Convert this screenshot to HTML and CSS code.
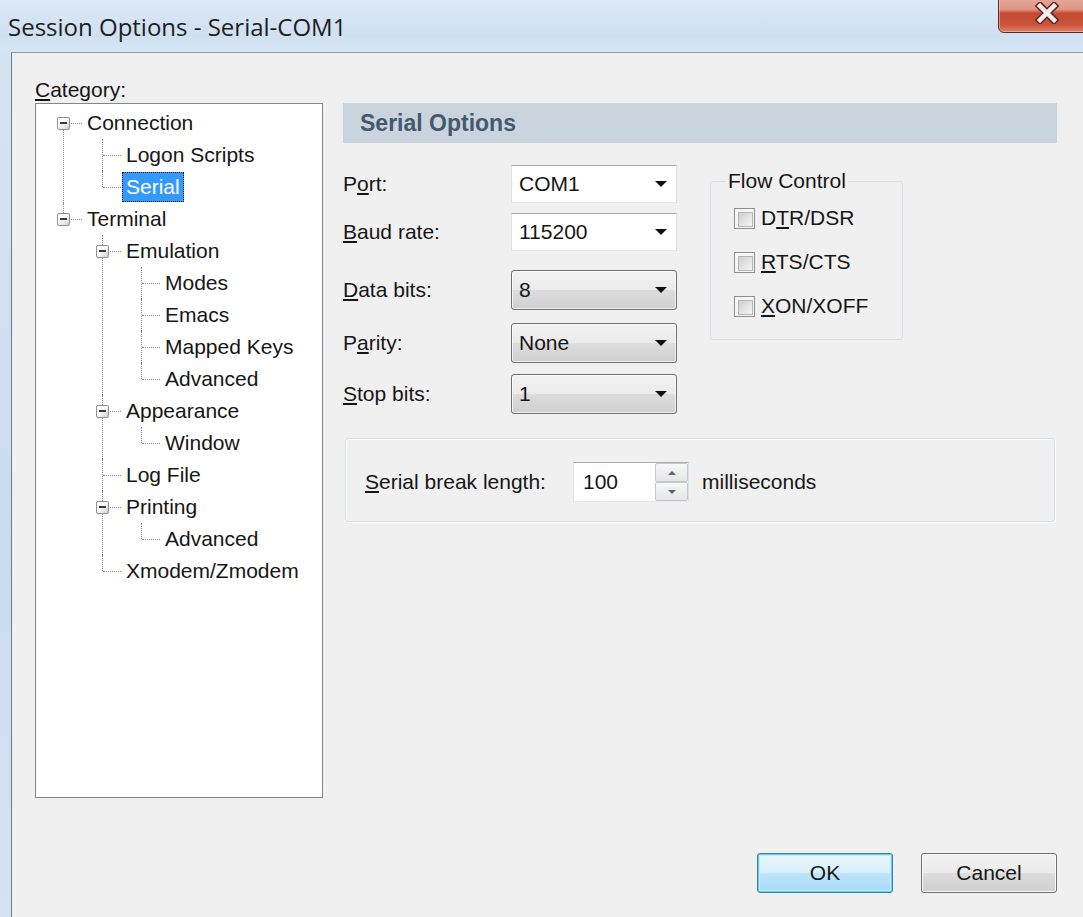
FILE: index.html
```html
<!DOCTYPE html>
<html lang="en">
<head>
<meta charset="utf-8">
<title>Session Options - Serial-COM1</title>
<link rel="stylesheet" href="styles.css">
</head>
<body>
<div class="window">
  <header class="titlebar">
    <span class="title">Session Options - Serial-COM1</span>
    <button class="close" type="button" aria-label="Close">
      <svg width="26" height="22" viewBox="0 0 26 22">
        <path d="M6 4 L20 18 M20 4 L6 18" stroke="#5b2b25" stroke-width="7.5" stroke-linecap="square" fill="none"/>
        <path d="M6 4 L20 18 M20 4 L6 18" stroke="#f3ecea" stroke-width="4.5" stroke-linecap="square" fill="none"/>
      </svg>
    </button>
  </header>

  <div class="frame">
    <div class="client">
      <div class="main">
        <aside class="category">
          <div class="cat-label"><u>C</u>ategory:</div>
          <div class="tree-box">
            <ul class="tree">
              <li class="branch">
                <div class="row"><span class="expander"></span><span class="label">Connection</span></div>
                <ul>
                  <li><div class="row"><span class="label">Logon Scripts</span></div></li>
                  <li><div class="row"><span class="label selected">Serial</span></div></li>
                </ul>
              </li>
              <li class="branch">
                <div class="row"><span class="expander"></span><span class="label">Terminal</span></div>
                <ul>
                  <li class="branch">
                    <div class="row"><span class="expander"></span><span class="label">Emulation</span></div>
                    <ul>
                      <li><div class="row"><span class="label">Modes</span></div></li>
                      <li><div class="row"><span class="label">Emacs</span></div></li>
                      <li><div class="row"><span class="label">Mapped Keys</span></div></li>
                      <li><div class="row"><span class="label">Advanced</span></div></li>
                    </ul>
                  </li>
                  <li class="branch">
                    <div class="row"><span class="expander"></span><span class="label">Appearance</span></div>
                    <ul>
                      <li><div class="row"><span class="label">Window</span></div></li>
                    </ul>
                  </li>
                  <li><div class="row"><span class="label">Log File</span></div></li>
                  <li class="branch">
                    <div class="row"><span class="expander"></span><span class="label">Printing</span></div>
                    <ul>
                      <li><div class="row"><span class="label">Advanced</span></div></li>
                    </ul>
                  </li>
                  <li><div class="row"><span class="label">Xmodem/Zmodem</span></div></li>
                </ul>
              </li>
            </ul>
          </div>
        </aside>

        <section class="page">
          <h2 class="page-title">Serial Options</h2>

          <div class="serial-form">
            <div class="fields">
              <div class="field edit-row">
                <label>P<u>o</u>rt:</label>
                <div class="combo edit"><span class="value">COM1</span><span class="arrow"></span></div>
              </div>
              <div class="field edit-row gap-sm">
                <label><u>B</u>aud rate:</label>
                <div class="combo edit"><span class="value">115200</span><span class="arrow"></span></div>
              </div>
              <div class="field list-row gap-lg">
                <label><u>D</u>ata bits:</label>
                <div class="combo list"><span class="value">8</span><span class="arrow"></span></div>
              </div>
              <div class="field list-row gap-md">
                <label>P<u>a</u>rity:</label>
                <div class="combo list"><span class="value">None</span><span class="arrow"></span></div>
              </div>
              <div class="field list-row gap-sm">
                <label><u>S</u>top bits:</label>
                <div class="combo list"><span class="value">1</span><span class="arrow"></span></div>
              </div>
            </div>

            <fieldset class="flow">
              <legend>Flow Control</legend>
              <div class="check"><span class="box"></span><span>D<u>T</u>R/DSR</span></div>
              <div class="check"><span class="box"></span><span><u>R</u>TS/CTS</span></div>
              <div class="check"><span class="box"></span><span><u>X</u>ON/XOFF</span></div>
            </fieldset>
          </div>

          <div class="break-group">
            <span class="break-label"><u>S</u>erial break length:</span>
            <div class="spin">
              <span class="value">100</span>
              <span class="spin-buttons">
                <span class="spin-btn"><span class="tri up"></span></span>
                <span class="spin-btn"><span class="tri down"></span></span>
              </span>
            </div>
            <span class="units">milliseconds</span>
          </div>
        </section>
      </div>

      <div class="buttons">
        <button class="btn default" type="button">OK</button>
        <button class="btn" type="button">Cancel</button>
      </div>
    </div>
  </div>
</div>
</body>
</html>
```

FILE: styles.css
```css
* { box-sizing: border-box; }

html, body {
  margin: 0;
  padding: 0;
  width: 1083px;
  height: 917px;
  overflow: hidden;
}

body {
  font-family: "Liberation Sans", Arial, sans-serif;
  font-size: 21px;
  color: #161616;
  background: #cfe0f2;
}

u { text-decoration: underline; text-underline-offset: 2px; }

/* window chrome */
.window {
  width: 1083px;
  height: 917px;
  display: flex;
  flex-direction: column;
  overflow: hidden;
  background: linear-gradient(to bottom, #d6e5f4, #c9dcef 60%, #d3e3f3);
}

.titlebar {
  height: 52px;
  flex: none;
  display: flex;
  align-items: center;
  padding-left: 8px;
  background: linear-gradient(to bottom, #dce9f6, #cfe0f1 70%, #d7e6f5);
}

.title {
  font-family: "Open Sans", "Noto Sans", sans-serif;
  font-size: 24px;
  color: #1e1e1e;
}

.close {
  margin-left: auto;
  align-self: flex-start;
  margin-top: -8px;
  margin-right: -13px;
  width: 98px;
  height: 41px;
  padding: 0;
  display: flex;
  align-items: center;
  justify-content: center;
  border: 1px solid #5e2a22;
  border-radius: 0 0 6px 6px;
  background: linear-gradient(to bottom, #eab2a5 0%, #df9484 42%, #c54a33 52%, #c9533a 80%, #dd8266 100%);
  box-shadow: inset 0 0 0 1px rgba(255, 220, 210, 0.45);
}

.frame {
  flex: 1;
  display: flex;
  padding-left: 11px;
}

.client {
  flex: 1;
  display: flex;
  flex-direction: column;
  background: #f0f0f0;
  border-top: 1px solid #8d9cab;
  border-left: 1px solid #6d7b8a;
}

.main {
  display: flex;
  padding: 25px 0 0 23px;
}

/* category tree */
.category {
  width: 288px;
  flex: none;
}

.cat-label {
  height: 25px;
  line-height: 24px;
}

.tree-box {
  height: 695px;
  background: #fff;
  border: 1px solid #828790;
  overflow: hidden;
}

.tree, .tree ul {
  list-style: none;
  margin: 0;
  padding: 0;
}

.tree { padding-top: 3px; }
.tree ul { padding-left: 39px; }

.tree li { position: relative; }

/* vertical guide */
.tree li::before {
  content: "";
  position: absolute;
  left: 27px;
  top: 0;
  bottom: 0;
  border-left: 1px dotted #8a8a8a;
}
.tree > li:first-child::before { top: 16px; }
.tree li:last-child::before { bottom: auto; height: 16px; }

.row {
  position: relative;
  height: 32px;
  display: flex;
  align-items: center;
  padding-left: 47px;
}

/* horizontal connector */
.row::before {
  content: "";
  position: absolute;
  left: 28px;
  top: 16px;
  width: 18px;
  border-top: 1px dotted #8a8a8a;
}

.expander {
  position: absolute;
  left: 21px;
  top: 10px;
  width: 13px;
  height: 13px;
  z-index: 1;
  border: 1px solid #919191;
  border-radius: 2px;
  background: linear-gradient(135deg, #ffffff 35%, #d2d2d2);
}
.expander::after {
  content: "";
  position: absolute;
  left: 2px;
  top: 4px;
  width: 7px;
  height: 2px;
  background: #3b3b3b;
}

.label {
  line-height: 28px;
  padding: 0 3px;
  border: 1px solid transparent;
  white-space: nowrap;
}

.label.selected {
  background: #3399ff;
  color: #fff;
  border: 1px dotted #1a1a1a;
}

/* property page */
.page {
  width: 714px;
  flex: none;
  margin-left: 20px;
  padding-top: 25px;
}

.page-title {
  margin: 0;
  height: 40px;
  line-height: 40px;
  padding-left: 17px;
  background: #c9d4df;
  color: #46596c;
  font-size: 23px;
  font-weight: bold;
}

.serial-form {
  display: flex;
  align-items: flex-start;
  margin-top: 22px;
}

.fields {
  width: 334px;
  flex: none;
  display: flex;
  flex-direction: column;
}

.field {
  display: flex;
  align-items: center;
}
.field label { width: 168px; flex: none; }

.edit-row { height: 38px; }
.list-row { height: 40px; }
.gap-sm { margin-top: 10px; }
.gap-md { margin-top: 13px; }
.gap-lg { margin-top: 19px; }
.list-row.gap-sm { margin-top: 11px; }

.combo {
  width: 167px;
  height: 100%;
  display: flex;
  align-items: center;
  padding-left: 7px;
}
.combo .value { flex: 1; }
.combo .arrow {
  width: 0;
  height: 0;
  margin-right: 9px;
  border-left: 6.5px solid transparent;
  border-right: 6.5px solid transparent;
  border-top: 6px solid #111;
}

.combo.edit {
  background: #fff;
  border: 1px solid;
  border-color: #abadb3 #dbdfe6 #e3e9ef #e2e3ea;
}

.combo.list {
  border: 1px solid #707070;
  border-radius: 3px;
  background: linear-gradient(to bottom, #f2f2f2 0%, #ebebeb 49%, #dddddd 50%, #cfcfcf 100%);
  box-shadow: inset 0 0 0 1px rgba(255, 255, 255, 0.7);
}

/* flow control group */
.flow {
  width: 193px;
  margin: 4px 0 0 33px;
  padding: 10px 0 18px 23px;
  border: 1px solid #d5dfe5;
  border-radius: 3px;
  min-inline-size: 0;
}
.flow legend {
  margin-left: -8px;
  padding: 0 2px;
  line-height: 24px;
}

.check {
  height: 30px;
  display: flex;
  align-items: center;
  gap: 6px;
}
.check + .check { margin-top: 14px; }

.check .box {
  width: 21px;
  height: 21px;
  flex: none;
  border: 1px solid #8e8f8f;
  padding: 3px;
  background: #f6f6f6;
}
.check .box::after {
  content: "";
  display: block;
  width: 100%;
  height: 100%;
  border: 1px solid #b5b5b5;
  background: linear-gradient(135deg, #cfcfcf, #f6f6f6);
}

/* serial break group */
.break-group {
  width: 710px;
  height: 84px;
  margin: 24px 0 0 2px;
  padding: 4px 0 0 19px;
  display: flex;
  align-items: center;
  border: 1px solid #d5dfe5;
  border-radius: 3px;
  box-shadow: inset 1px 1px 0 #fff, 1px 1px 0 #fff;
}

.break-label { width: 208px; flex: none; }

.spin {
  width: 116px;
  height: 40px;
  flex: none;
  display: flex;
  background: #fff;
  border: 1px solid;
  border-color: #abadb3 #dbdfe6 #e3e9ef #e2e3ea;
}
.spin .value {
  flex: 1;
  padding-left: 9px;
  line-height: 38px;
}
.spin-buttons {
  width: 33px;
  display: flex;
  flex-direction: column;
}
.spin-btn {
  flex: 1;
  display: flex;
  align-items: center;
  justify-content: center;
  border: 1px solid #c4c7cc;
  border-radius: 2px;
  background: linear-gradient(to bottom, #f7f7f7, #e6e6e6);
}
.tri {
  width: 0;
  height: 0;
  border-left: 4px solid transparent;
  border-right: 4px solid transparent;
}
.tri.up { border-bottom: 4px solid #56657a; }
.tri.down { border-top: 4px solid #56657a; }

.units { margin-left: 13px; }

/* dialog buttons */
.buttons {
  display: flex;
  justify-content: flex-end;
  gap: 28px;
  margin-top: 55px;
  padding-right: 26px;
}

.btn {
  width: 136px;
  height: 40px;
  padding: 0;
  font-family: "Liberation Sans", Arial, sans-serif;
  font-size: 21px;
  color: #161616;
  border: 1px solid #707070;
  border-radius: 3px;
  background: linear-gradient(to bottom, #f2f2f2 0%, #ebebeb 49%, #dddddd 50%, #cfcfcf 100%);
  box-shadow: inset 0 0 0 1px #fbfbfb;
}

.btn.default {
  border-color: #3c7fb1;
  background: linear-gradient(to bottom, #eaf6fd 0%, #d9f0fc 49%, #bee6fd 50%, #a7d9f5 100%);
  box-shadow: inset 0 0 0 1px #5fcdf5, inset 0 0 0 2px #c4ecfc;
}
```
